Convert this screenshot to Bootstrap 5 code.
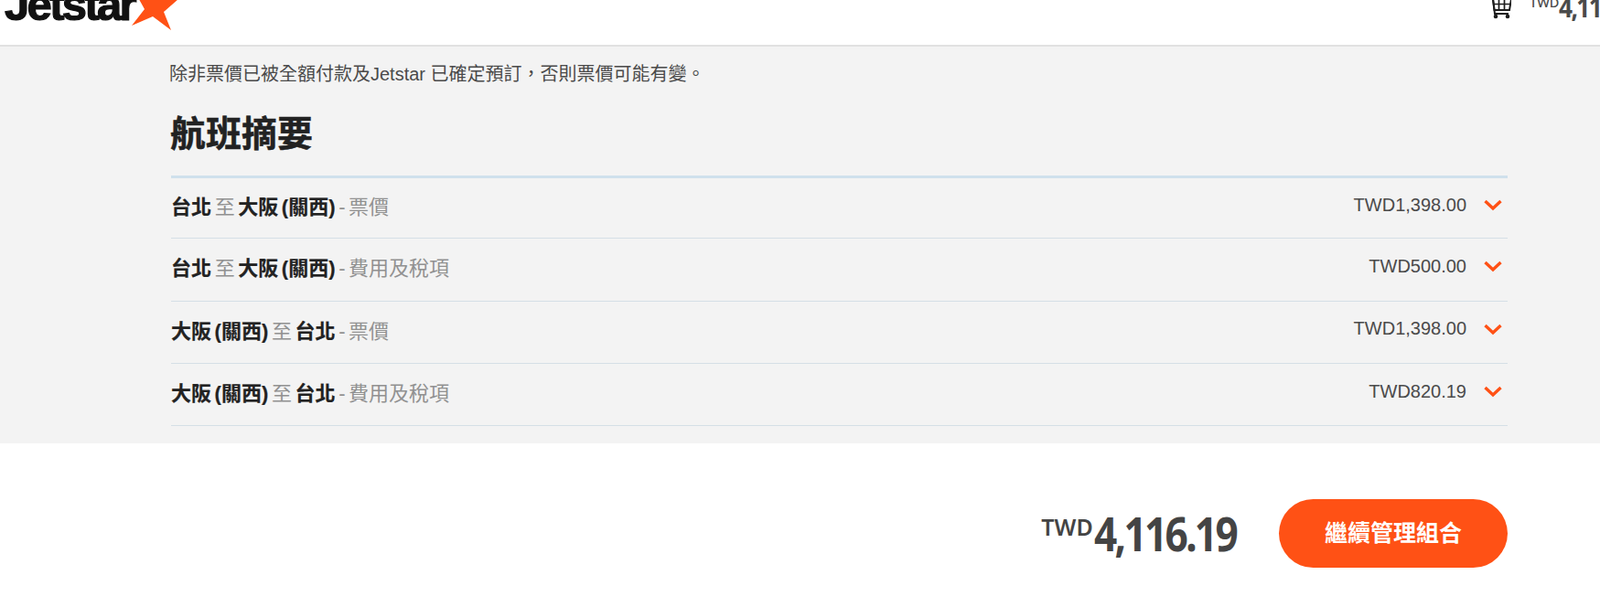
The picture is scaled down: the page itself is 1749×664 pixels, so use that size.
<!DOCTYPE html>
<html lang="zh-Hant">

<head>
	<meta charset="UTF-8">
	<title>航班摘要 | Jetstar</title>
	<link href="https://cdn.jsdelivr.net/npm/bootstrap@5.3.0/dist/css/bootstrap.min.css" rel="stylesheet">
	<style>
		body {
			font-family: "Liberation Sans", "Noto Sans CJK TC", sans-serif;
			color: #4a4a4a;
			background: #fff;
			overflow: hidden;
		}

		/* Header is cut off at the top and right in the picture */
		.top-bar {
			height: 51px;
			border-bottom: 2px solid #e1e1e1;
			overflow: hidden;
			padding-left: 5px;
		}

		.brand-word {
			font-size: 49px;
			line-height: 1;
			font-weight: 700;
			letter-spacing: -2.67px;
			color: #111;
			margin-top: -19px;
			-webkit-text-stroke: 1.2px #111;
		}

		.brand-star {
			width: 54px;
			height: 34px;
			margin-left: -4px;
			flex: none;
		}

		.top-cart {
			width: 120px;
			flex: none;
			white-space: nowrap;
		}

		.top-cart svg {
			width: 23px;
			height: 21px;
			flex: none;
		}

		.top-price {
			margin-left: 20px;
			margin-top: -8px;
			line-height: 1;
		}

		.cur-small {
			font-family: "Noto Sans", sans-serif;
			font-weight: 500;
			font-size: 14.5px;
			vertical-align: 11px;
		}

		/* the original figure font is condensed, none is installed */
		.amount-big {
			display: inline-block;
			font-family: "Noto Sans", sans-serif;
			font-weight: 700;
			font-size: 31px;
			letter-spacing: -1.9px;
			transform: scaleX(.85);
			transform-origin: left center;
		}

		.summary-band {
			background: #f3f3f3;
			height: 434px;
			padding: 16px 101px 0 186px;
		}

		.notice {
			font-size: 20px;
			line-height: 28px;
			margin: 0 0 0 -1px;
		}

		.stop-mark {
			font-family: "Noto Sans CJK JP", sans-serif;
			line-height: 0;
		}

		.summary-title {
			font-family: "Liberation Sans", "Noto Sans CJK TC", sans-serif;
			font-size: 39px;
			line-height: 50px;
			font-weight: 700;
			color: #222;
			margin: 27px 0 20px;
			-webkit-text-stroke: .5px #222;
		}

		.fare-list {
			border-top: 3px solid #cfe0ec;
			margin-left: 1px;
		}

		.fare-row {
			height: 68.3px;
			border-bottom: 1px solid #d5dfe6;
			padding-bottom: 5px;
		}

		.fare-row:first-child {
			height: 66.3px;
		}

		.fare-name {
			font-size: 22px;
			color: #919191;
			word-spacing: -2.5px;
			padding-top: 3px;
		}

		.fare-name b {
			color: #222;
			font-weight: 700;
			-webkit-text-stroke: .2px #222;
		}

		.fare-price {
			font-size: 20px;
			color: #4a4a4a;
			margin-right: 18px;
			margin-top: -3px;
		}

		.fare-arrow {
			width: 22px;
			height: 14px;
			margin-right: 5px;
			flex: none;
		}

		.total-bar {
			padding: 61px 101px 0 0;
		}

		.total-amount {
			margin-right: 46px;
			margin-top: -2px;
			line-height: 1;
			color: #444;
		}

		.total-amount .cur-small {
			font-size: 25px;
			font-weight: 600;
			vertical-align: 17px;
			margin-right: 1px;
		}

		.total-amount .amount-big {
			font-size: 52px;
			letter-spacing: -3.2px;
			margin-right: -26px;
		}

		.btn-continue {
			width: 250px;
			height: 75px;
			border-radius: 38px;
			background: #ff5115;
			border: 0;
			color: #fff;
			font-size: 25px;
			font-weight: 700;
		}

		.btn-continue:hover {
			background: #e8440c;
			color: #fff;
		}
	</style>
</head>

<body>

	<header class="top-bar d-flex justify-content-between">
		<div class="d-flex align-items-start">
			<span class="brand-word">Jetstar</span>
			<svg class="brand-star" viewBox="0 0 54 34">
				<polygon fill="#ff5115" points="52,-1 36,13 44,33 24,18 1,28 15,10 5,-8 22,-2 26,-14 34,-2" />
			</svg>
		</div>
		<div class="top-cart d-flex align-items-start">
			<svg viewBox="0 0 23 21">
				<!-- basket with grid, handle and two wheels -->
				<path d="M0 -2V-1H3L5 15H20" fill="none" stroke="#1d1d1d" stroke-width="2" />
				<path d="M3 -1H23L21 11H4.500Z" fill="none" stroke="#1d1d1d" stroke-width="2" />
				<path d="M4 4.500H22M9.500 -1V11M15.500 -1V11" stroke="#1d1d1d" stroke-width="1.700" />
				<circle cx="6" cy="18" r="2.300" fill="#1d1d1d" />
				<circle cx="19" cy="18" r="2.300" fill="#1d1d1d" />
			</svg>
			<div class="top-price"><span class="cur-small">TWD</span><span class="amount-big">4,116.19</span></div>
		</div>
	</header>

	<section class="summary-band">
		<p class="notice">除非票價已被全額付款及Jetstar 已確定預訂，否則票價可能有變<span class="stop-mark">。</span></p>
		<h2 class="summary-title">航班摘要</h2>
		<div class="fare-list" id="fareList"></div>
	</section>

	<div class="total-bar d-flex justify-content-end align-items-center">
		<div class="total-amount"><span class="cur-small">TWD</span><span class="amount-big">4,116.19</span></div>
		<button class="btn btn-continue" type="button">繼續管理組合</button>
	</div>

	<script>
		const fares = [
			['台北', '大阪 (關西)', '票價', 'TWD1,398.00'],
			['台北', '大阪 (關西)', '費用及稅項', 'TWD500.00'],
			['大阪 (關西)', '台北', '票價', 'TWD1,398.00'],
			['大阪 (關西)', '台北', '費用及稅項', 'TWD820.19']
		];
		const list = document.getElementById('fareList');

		fares.forEach((f) => {
			const row = document.createElement('div');
			row.className = 'fare-row d-flex justify-content-between align-items-center';
			row.innerHTML = `
				<div class="fare-name"><b>${f[0]}</b> 至 <b>${f[1]}</b> - ${f[2]}</div>
				<div class="d-flex align-items-center">
					<span class="fare-price">${f[3]}</span>
					<svg class="fare-arrow" viewBox="0 0 22 14"><path d="M2.500 2L11 10L19.500 2" fill="none" stroke="#ff5115" stroke-width="3.4"/></svg>
				</div>`;
			list.appendChild(row);
		});
	</script>
	<script src="https://cdn.jsdelivr.net/npm/bootstrap@5.3.0/dist/js/bootstrap.bundle.min.js"></script>
</body>

</html>
